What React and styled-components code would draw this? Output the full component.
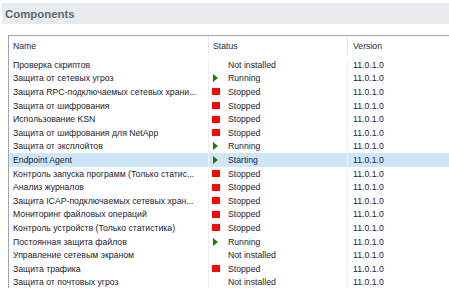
import React from "react";
import styled, { createGlobalStyle } from "styled-components";

const rows = [
  { name: "Проверка скриптов", status: "Not installed" },
  { name: "Защита от сетевых угроз", status: "Running" },
  { name: "Защита RPC-подключаемых сетевых храни...", status: "Stopped" },
  { name: "Защита от шифрования", status: "Stopped" },
  { name: "Использование KSN", status: "Stopped" },
  { name: "Защита от шифрования для NetApp", status: "Stopped" },
  { name: "Защита от эксплойтов", status: "Running" },
  { name: "Endpoint Agent", status: "Starting", selected: true },
  { name: "Контроль запуска программ (Только статис...", status: "Stopped" },
  { name: "Анализ журналов", status: "Stopped" },
  { name: "Защита ICAP-подключаемых сетевых хран...", status: "Stopped" },
  { name: "Мониторинг файловых операций", status: "Stopped" },
  { name: "Контроль устройств (Только статистика)", status: "Stopped" },
  { name: "Постоянная защита файлов", status: "Running" },
  { name: "Управление сетевым экраном", status: "Not installed" },
  { name: "Защита трафика", status: "Stopped" },
  { name: "Защита от почтовых угроз", status: "Not installed" },
];

const GlobalStyle = createGlobalStyle`
  body {
    margin: 0;
    background: #ffffff;
    font-family: "Liberation Sans", Arial, sans-serif;
    overflow: hidden;
  }
`;

const Page = styled.div`
  width: 449px;
  height: 288px;
  padding-top: 3px;
  box-sizing: border-box;
`;

const TitleBar = styled.div`
  margin-left: 2px;
  height: 21px;
  background: #e9ecef;
  display: flex;
  align-items: center;
  padding-left: 3px;
`;

const Title = styled.h2`
  margin: 0;
  font-size: 11.4px;
  font-weight: bold;
  color: #5c6873;
`;

const Table = styled.div`
  margin: 11px 0 0 8px;
  border-top: 1px solid #a3a7ab;
  border-left: 1px solid #a3a7ab;
  font-size: 8.7px;
  color: #1c2430;
`;

const HeadRow = styled.div`
  display: grid;
  grid-template-columns: 199px 139px 1fr;
  height: 19px;
  align-items: center;
`;

const HeadCell = styled.div`
  padding-left: ${(p) => p.$pad || 4}px;
  border-left: ${(p) => (p.$first ? "none" : "1px solid #e3e5e8")};
  height: 100%;
  display: flex;
  align-items: center;
  color: #1e2a3a;
`;

const Row = styled.div`
  display: grid;
  grid-template-columns: 199px 139px 1fr;
  height: 13.6px;
  align-items: center;
  background: ${(p) => (p.$selected ? "#cde6fa" : "transparent")};
`;

const Cell = styled.div`
  padding-left: ${(p) => p.$pad || 4}px;
  white-space: nowrap;
  overflow: hidden;
  display: flex;
  align-items: center;
  height: 100%;
  border-left: ${(p) => (p.$line ? "1px solid #f0f1f3" : "none")};
`;

const Icon = styled.span`
  width: 16px;
  flex: none;
  display: flex;
  align-items: center;
`;

const Stop = styled.span`
  width: 8px;
  height: 7px;
  background: #f20c00;
  display: block;
`;

const Play = styled.span`
  width: 0;
  height: 0;
  margin-left: 1px;
  border-top: 4px solid transparent;
  border-bottom: 4px solid transparent;
  border-left: 5px solid #1d7a12;
  display: block;
`;

const Gap = styled.div`
  height: 3px;
`;

const StatusIcon = ({ status }) => {
  if (status === "Stopped") return <Stop />;
  if (status === "Running" || status === "Starting") return <Play />;
  return null;
};

const App = () => (
  <Page>
    <GlobalStyle />
    <TitleBar>
      <Title>Components</Title>
    </TitleBar>
    <Table>
      <HeadRow>
        <HeadCell $first>Name</HeadCell>
        <HeadCell>Status</HeadCell>
        <HeadCell $pad={5}>Version</HeadCell>
      </HeadRow>
      <Gap />
      {rows.map((r) => (
        <Row key={r.name} $selected={r.selected}>
          <Cell>{r.name}</Cell>
          <Cell $pad={3} $line>
            <Icon>
              <StatusIcon status={r.status} />
            </Icon>
            {r.status}
          </Cell>
          <Cell $pad={5} $line>
            11.0.1.0
          </Cell>
        </Row>
      ))}
    </Table>
  </Page>
);

export default App;
